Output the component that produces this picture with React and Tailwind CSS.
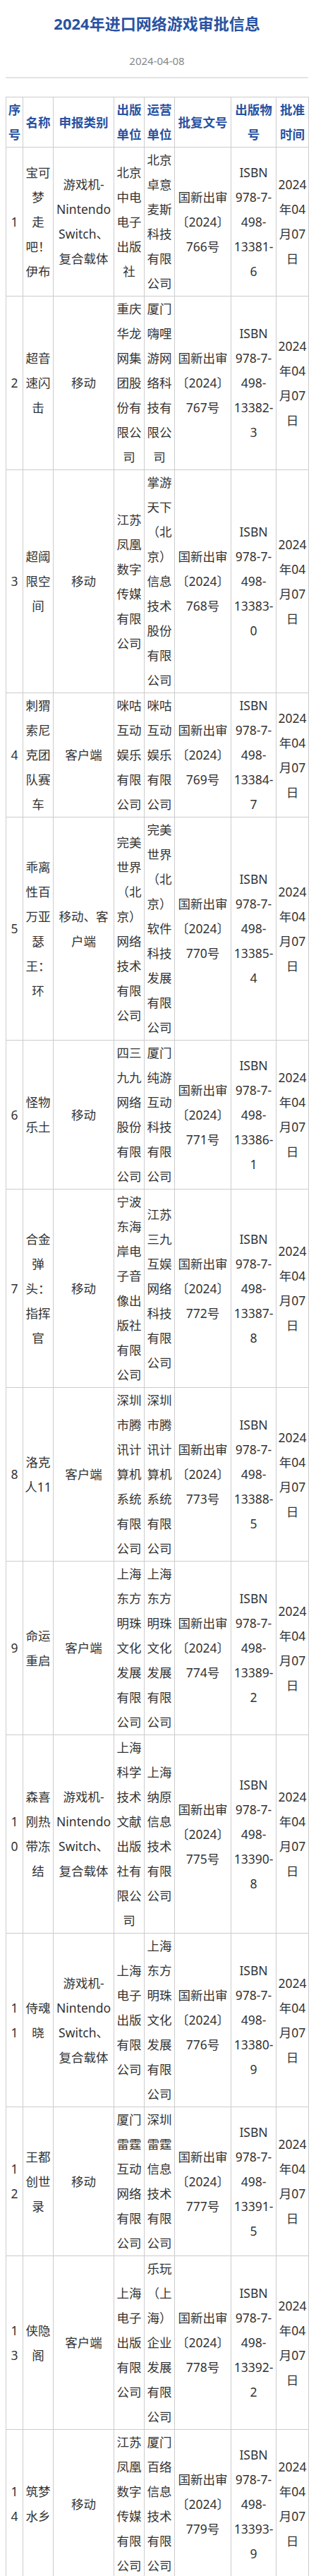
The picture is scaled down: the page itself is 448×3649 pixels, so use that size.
import React from 'react';

const headers = ['序号', '名称', '申报类别', '出版单位', '运营单位', '批复文号', '出版物号', '批准时间'];
const colWidths = ['w-[24px]', 'w-[43px]', 'w-[86px]', 'w-[43px]', 'w-[43px]', 'w-[80px]', 'w-[64px]', 'w-[46px]'];

const games = [
  ['宝可梦 走吧！伊布', '游戏机-Nintendo Switch、复合载体', '北京中电电子出版社', '北京卓意麦斯科技有限公司', '766', '13381-6'],
  ['超音速闪击', '移动', '重庆华龙网集团股份有限公司', '厦门嗨哩游网络科技有限公司', '767', '13382-3'],
  ['超阈限空间', '移动', '江苏凤凰数字传媒有限公司', '掌游天下（北京）信息技术股份有限公司', '768', '13383-0'],
  ['刺猬索尼克团队赛车', '客户端', '咪咕互动娱乐有限公司', '咪咕互动娱乐有限公司', '769', '13384-7'],
  ['乖离性百万亚瑟王：环', '移动、客户端', '完美世界（北京）网络技术有限公司', '完美世界（北京）软件科技发展有限公司', '770', '13385-4'],
  ['怪物乐土', '移动', '四三九九网络股份有限公司', '厦门纯游互动科技有限公司', '771', '13386-1'],
  ['合金弹头：指挥官', '移动', '宁波东海岸电子音像出版社有限公司', '江苏三九互娱网络科技有限公司', '772', '13387-8'],
  ['洛克人11', '客户端', '深圳市腾讯计算机系统有限公司', '深圳市腾讯计算机系统有限公司', '773', '13388-5'],
  ['命运重启', '客户端', '上海东方明珠文化发展有限公司', '上海东方明珠文化发展有限公司', '774', '13389-2'],
  ['森喜刚热带冻结', '游戏机-Nintendo Switch、复合载体', '上海科学技术文献出版社有限公司', '上海纳原信息技术有限公司', '775', '13390-8'],
  ['侍魂晓', '游戏机-Nintendo Switch、复合载体', '上海电子出版有限公司', '上海东方明珠文化发展有限公司', '776', '13380-9'],
  ['王都创世录', '移动', '厦门雷霆互动网络有限公司', '深圳雷霆信息技术有限公司', '777', '13391-5'],
  ['侠隐阁', '客户端', '上海电子出版有限公司', '乐玩（上海）企业发展有限公司', '778', '13392-2'],
  ['筑梦水乡', '移动', '江苏凤凰数字传媒有限公司', '厦门百络信息技术有限公司', '779', '13393-9'],
];

const cell = 'border border-[#cccccc] px-[2px] py-0 text-center align-middle break-words';

export default function App() {
  return (
    <div className="bg-white min-h-screen text-[#333333] font-['Noto_Sans','Noto_Sans_CJK_SC',sans-serif]">
      <div className="ml-2 w-[429px]">
        <h1 className="pt-[19px] text-center text-[22px] font-bold leading-[28px] text-[#2852a2]">
          2024年进口网络游戏审批信息
        </h1>
        <p className="mt-[29px] text-center text-[15px] leading-[20px] text-[#888888]">2024-04-08</p>
        <div className="mt-[13px] border-t-2 border-[#e3e3e3]" />
        <table className="mt-[26px] w-[429px] table-fixed border-collapse text-[17.5px] leading-[35px]">
          <colgroup>
            {colWidths.map((w, i) => (
              <col key={i} className={w} />
            ))}
          </colgroup>
          <thead>
            <tr>
              {headers.map((h) => (
                <th key={h} className={`${cell} font-bold text-[#2852a2]`}>
                  {h}
                </th>
              ))}
            </tr>
          </thead>
          <tbody>
            {games.map((g, i) => (
              <tr key={i}>
                <td className={cell}>{i + 1}</td>
                <td className={cell}>{g[0]}</td>
                <td className={cell}>{g[1]}</td>
                <td className={cell}>{g[2]}</td>
                <td className={cell}>{g[3]}</td>
                <td className={cell}>国新出审〔2024〕{g[4]}号</td>
                <td className={cell}>ISBN 978-7-498-{g[5]}</td>
                <td className={cell}>2024年04月07日</td>
              </tr>
            ))}
          </tbody>
        </table>
      </div>
    </div>
  );
}
